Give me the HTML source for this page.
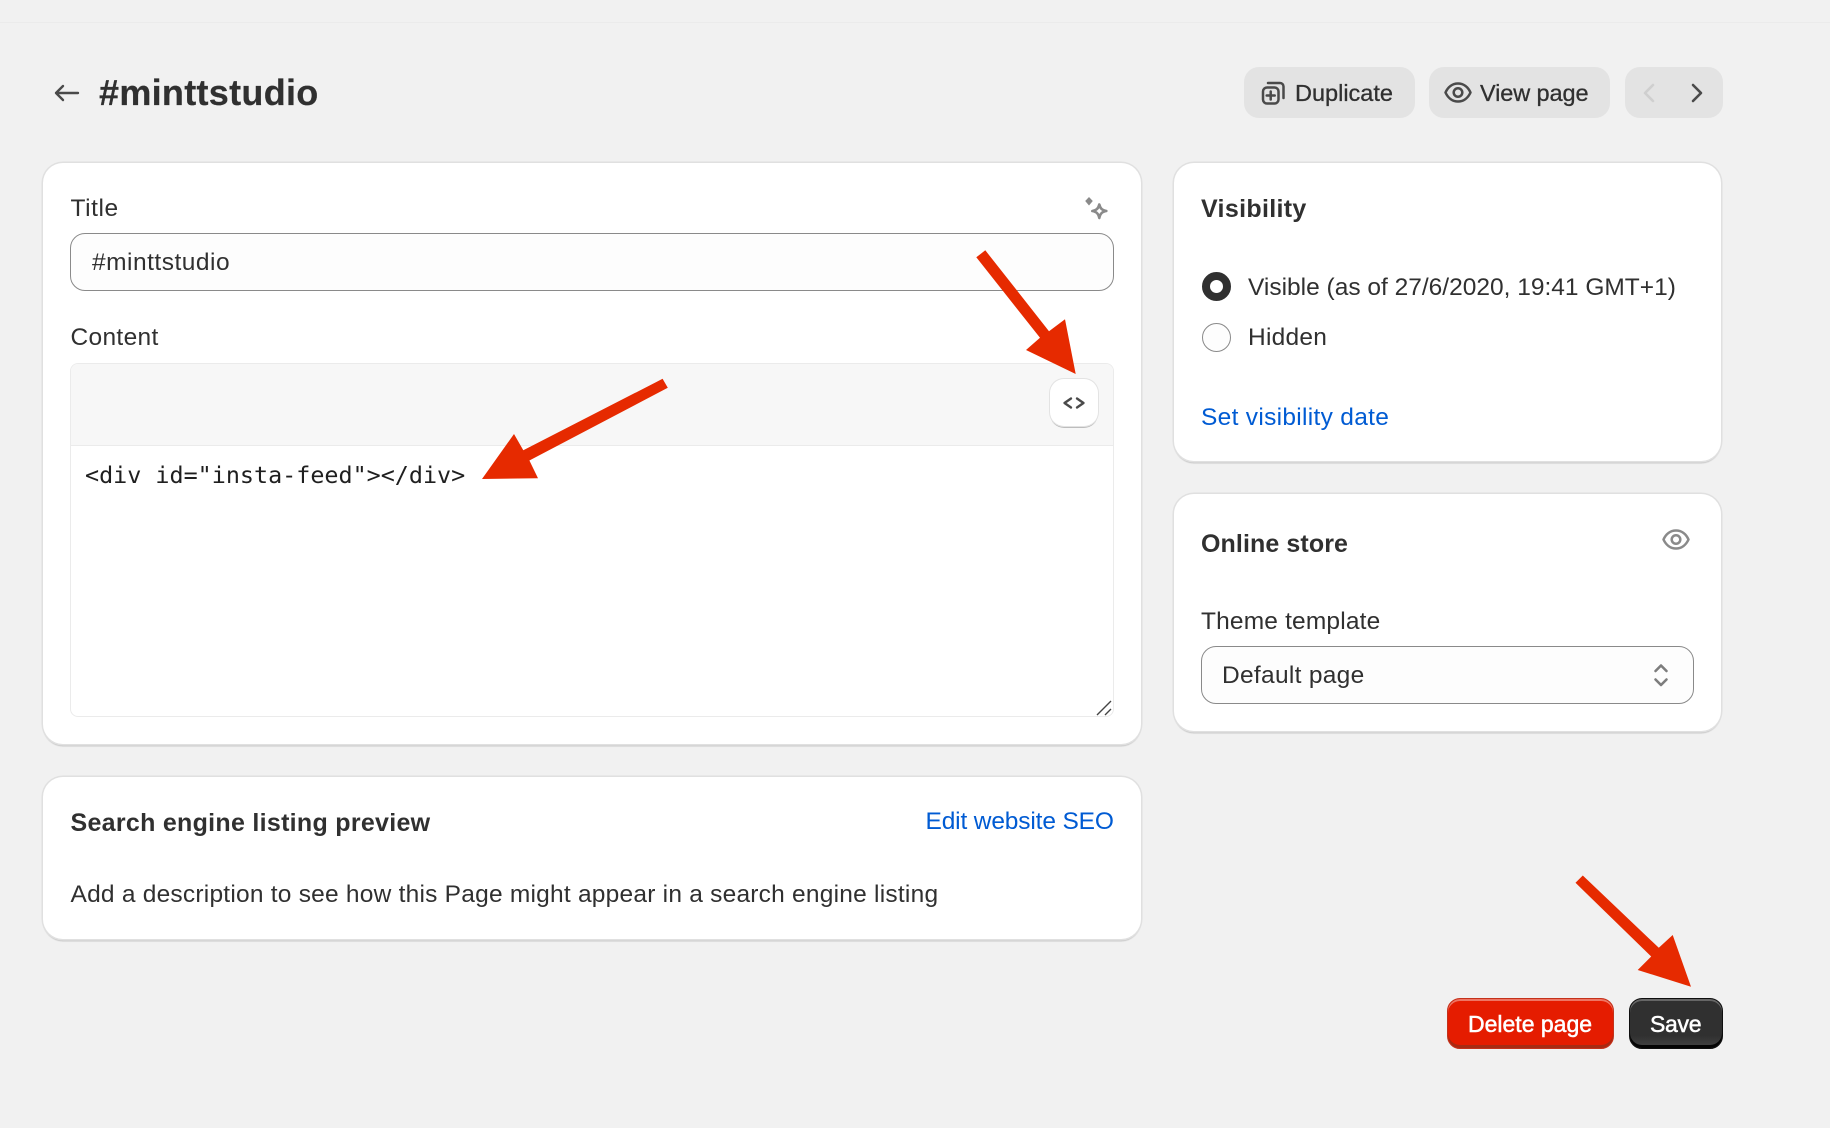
<!DOCTYPE html>
<html lang="en"><head><meta charset="utf-8"><title>#minttstudio</title>
<style>
html,body{margin:0;padding:0}
body{position:relative;width:1830px;height:1128px;overflow:hidden;background:#f1f1f1;font-family:"Liberation Sans",sans-serif;color:#303030}
.t{position:absolute;white-space:nowrap;line-height:30px;font-size:24.5px}
.b{font-weight:700;font-size:25px}
.m{font-size:23.5px;-webkit-text-stroke:.3px #303030}
.a{color:#005bd3}
.card{position:absolute;background:#fff;border-radius:20px;box-shadow:0 0 0 1.5px #e0e0e0,0 2.5px 1px #c9c9c9}
.btn{position:absolute;background:#e3e3e3;border-radius:15px;top:67px;height:51px}
.inp{position:absolute;background:#fdfdfd;border:1px solid #8a8a8a;border-radius:15px;box-sizing:border-box}
svg{position:absolute;overflow:visible}
</style></head><body>
<div style="position:absolute;left:0;top:22px;width:1830px;height:1px;background:#ebebeb"></div>

<svg style="left:54px;top:84px" width="26" height="18" viewBox="0 0 26 18" fill="none" stroke="#4a4a4a" stroke-width="2.400" stroke-linecap="round" stroke-linejoin="round"><path d="M24 9H2M9 2 2 9l7 7"/></svg>
<div class="t" style="left:99px;top:73px;line-height:40px;font-size:36px;font-weight:700;letter-spacing:.3px;-webkit-text-stroke:.2px #303030">#minttstudio</div>

<div class="btn" style="left:1244px;width:171px"></div>
<svg style="left:1261px;top:81px" width="24" height="24" viewBox="0 0 24 24" fill="none" stroke="#4a4a4a" stroke-width="2.500" stroke-linejoin="round" stroke-linecap="round"><rect x="2" y="6.500" width="15.500" height="16" rx="4"/><path d="M7 2h12a3.500 3.500 0 0 1 3.500 3.500V17M9.700 10.500v8M5.700 14.500h8"/></svg>
<div class="t m" style="left:1295px;top:78px">Duplicate</div>

<div class="btn" style="left:1429px;width:181px"></div>
<svg style="left:1444px;top:82px" width="28" height="21" viewBox="0 0 28 21" fill="none" stroke="#4a4a4a" stroke-width="2.500"><path d="M1.500 10.500C4 5 8.500 1.500 14 1.500S24 5 26.500 10.500C24 16 19.500 19.500 14 19.500S4 16 1.500 10.500Z" stroke-linejoin="round"/><circle cx="14" cy="10.500" r="4.300"/></svg>
<div class="t m" style="left:1480px;top:78px;letter-spacing:-.1px">View page</div>

<div class="btn" style="left:1625px;width:98px"></div>
<svg style="left:1642px;top:83px" width="13" height="20" viewBox="0 0 13 20" fill="none" stroke="#cfcfcf" stroke-width="2.600" stroke-linecap="round" stroke-linejoin="round"><path d="M11 2 3 10l8 8"/></svg>
<svg style="left:1691px;top:83px" width="13" height="20" viewBox="0 0 13 20" fill="none" stroke="#4a4a4a" stroke-width="2.600" stroke-linecap="round" stroke-linejoin="round"><path d="M2 2l8 8-8 8"/></svg>

<!-- main card -->
<div class="card" style="left:43px;top:163px;width:1098px;height:581px"></div>
<div class="t" style="left:70.500px;top:194px;letter-spacing:.55px">Title</div>
<svg style="left:1084px;top:196px" width="28" height="28" viewBox="0 0 28 28"><path d="M5 1 8.800 5 5 9.500 1.200 5Z" fill="#8a8a8a"/><path d="M15.300 8.500c1 4 2.700 5.700 7 6.500-4.300 .8-6 2.500-7 7-1-4.500-2.700-6.200-7-7 4.300-.8 6-2.500 7-6.500Z" fill="none" stroke="#8a8a8a" stroke-width="2.600" stroke-linejoin="round"/></svg>
<div class="inp" style="left:70px;top:233px;width:1044px;height:58px"></div>
<div class="t" style="left:92px;top:248px;letter-spacing:.5px">#minttstudio</div>

<div class="t" style="left:70.500px;top:323px;letter-spacing:.33px">Content</div>
<div style="position:absolute;left:70px;top:363px;width:1044px;height:354px;box-sizing:border-box;border:1px solid #ebebeb;border-radius:8px;background:#fff;overflow:hidden">
  <div style="height:81px;background:#f7f7f7;border-bottom:1px solid #ebebeb"></div>
</div>
<div style="position:absolute;left:1050px;top:379px;width:48px;height:47px;background:#fff;border-radius:14px;box-shadow:0 0 0 1px #e3e3e3,0 2px 0 #bdbdbd"></div>
<svg style="left:1063px;top:397px" width="22" height="12" viewBox="0 0 22 12" fill="none" stroke="#4a4a4a" stroke-width="2.400" stroke-linejoin="round" stroke-linecap="round"><path d="M8 1.500 1.500 6 8 10.500M14 1.500 20.500 6 14 10.500"/></svg>
<div class="t" style="left:85px;top:460px;font-family:'DejaVu Sans Mono','Liberation Mono',monospace;font-size:23.4px;color:#1f1f1f">&lt;div id="insta-feed"&gt;&lt;/div&gt;</div>
<svg style="left:1095px;top:699px" width="18" height="18" viewBox="0 0 18 18" fill="none" stroke="#444" stroke-width="1.400"><path d="M2 16 16 2M10 16l6-6"/></svg>

<!-- SEO card -->
<div class="card" style="left:43px;top:777px;width:1098px;height:162px"></div>
<div class="t b" style="left:70.500px;top:808px;letter-spacing:.29px">Search engine listing preview</div>
<div class="t a" style="left:925.500px;top:807px;letter-spacing:-.15px">Edit website SEO</div>
<div class="t" style="left:70.500px;top:880px;letter-spacing:.23px">Add a description to see how this Page might appear in a search engine listing</div>

<!-- Visibility -->
<div class="card" style="left:1174px;top:163px;width:547px;height:298px"></div>
<div class="t b" style="left:1201px;top:194px;letter-spacing:.33px">Visibility</div>
<div style="position:absolute;left:1202px;top:272px;width:29px;height:29px;box-sizing:border-box;border-radius:50%;border:8px solid #303030;background:#fff"></div>
<div class="t" style="left:1248px;top:273px">Visible (as of 27/6/2020, 19:41 GMT+1)</div>
<div style="position:absolute;left:1202px;top:323px;width:29px;height:29px;box-sizing:border-box;border-radius:50%;border:1px solid #8a8a8a;background:#fdfdfd"></div>
<div class="t" style="left:1248px;top:323px;letter-spacing:.25px">Hidden</div>
<div class="t a" style="left:1201px;top:403px;letter-spacing:.3px">Set visibility date</div>

<!-- Online store -->
<div class="card" style="left:1174px;top:494px;width:547px;height:237px"></div>
<div class="t b" style="left:1201px;top:529px;letter-spacing:.1px">Online store</div>
<svg style="left:1662px;top:529px" width="28" height="21" viewBox="0 0 28 21" fill="none" stroke="#8a8a8a" stroke-width="2.500"><path d="M1.500 10.500C4 5 8.500 1.500 14 1.500S24 5 26.500 10.500C24 16 19.500 19.500 14 19.500S4 16 1.500 10.500Z" stroke-linejoin="round"/><circle cx="14" cy="10.500" r="4.300"/></svg>
<div class="t" style="left:1201px;top:607px;letter-spacing:.17px">Theme template</div>
<div class="inp" style="left:1201px;top:646px;width:493px;height:58px"></div>
<div class="t" style="left:1222px;top:661px;letter-spacing:.3px">Default page</div>
<svg style="left:1652px;top:663px" width="18" height="24" viewBox="0 0 18 24" fill="none" stroke="#7d7d7d" stroke-width="2.600" stroke-linecap="round" stroke-linejoin="round"><path d="M3.500 8 9 2.500 14.500 8M3.500 16.500 9 22l5.500-5.500"/></svg>

<!-- Footer buttons -->
<div style="position:absolute;left:1447px;top:998px;width:167px;height:51px;box-sizing:border-box;border-radius:13px;background:#e51c00;border:1px solid #c4311b;box-shadow:inset 0 2px 0 #ee7564,inset 0 -3px 0 #a82a13"></div>
<div class="t" style="left:1468px;top:1009px;color:#fff;font-size:23px;-webkit-text-stroke:.5px #fff">Delete page</div>
<div style="position:absolute;left:1629px;top:998px;width:94px;height:51px;box-sizing:border-box;border-radius:13px;background:linear-gradient(#303030 75%,#444);border:1px solid #0f0f0f;box-shadow:inset 0 2px 0 #666,inset 0 -3px 0 #050505"></div>
<div class="t" style="left:1650px;top:1009px;color:#fff;font-size:23px;letter-spacing:-.3px;-webkit-text-stroke:.5px #fff">Save</div>

<!-- red arrows -->
<svg style="left:0;top:0" width="1830" height="1128" fill="#e62a00">
<polygon points="976.300,257.300 985.300,250.300 1049,331.200 1065,319.300 1075.700,374 1026,350 1040,337.800"/>
<polygon points="662.600,378.800 667.800,387.800 529.400,460.500 538,478.300 482,479 514,434 523.300,450.200"/>
<polygon points="1575.500,882.800 1582.800,875.500 1658.800,947.800 1672.700,935 1691,986.700 1637.700,970 1651.200,956.500"/>
</svg>
</body></html>
